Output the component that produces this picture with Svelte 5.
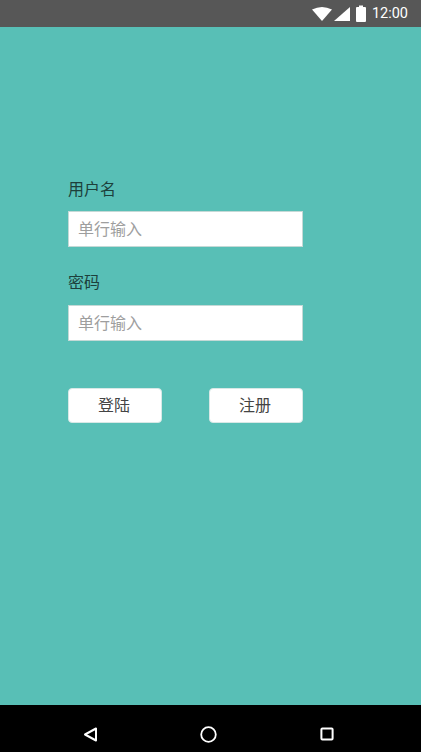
<script>
  let username = $state('');
  let password = $state('');
</script>

<div class="phone">
  <header class="status">
    <svg class="wifi" width="20" height="14" viewBox="0 0 20 14"><path d="M0 2.5 Q10 -2.5 20 2.5 L10 14Z" fill="#fff"/></svg>
    <svg class="signal" width="16" height="14" viewBox="0 0 16 14"><path d="M0 14 L16 0 V14Z" fill="#fff"/></svg>
    <svg class="battery" width="10" height="17" viewBox="0 0 10 17"><path d="M3 0.5 H7 V2 H9 Q10 2 10 3 V16 Q10 17 9 17 H1 Q0 17 0 16 V3 Q0 2 1 2 H3Z" fill="#fff"/></svg>
    <span class="time">12:00</span>
  </header>

  <main>
    <form class="login" onsubmit={(e) => e.preventDefault()}>
      <label class="first" for="username">用户名</label>
      <input id="username" bind:value={username} placeholder="单行输入" />
      <label class="second" for="password">密码</label>
      <input id="password" type="password" bind:value={password} placeholder="单行输入" />
      <div class="actions">
        <button type="submit">登陆</button>
        <button type="button">注册</button>
      </div>
    </form>
  </main>

  <nav class="softkeys">
    <svg width="15" height="15" viewBox="0 0 15 15"><path d="M13 1.5 V13.5 L2 7.5Z" fill="none" stroke="#fff" stroke-width="2" stroke-linejoin="round"/></svg>
    <svg class="home" width="17" height="17" viewBox="0 0 17 17"><circle cx="8.5" cy="8.5" r="7.3" fill="none" stroke="#fff" stroke-width="1.8"/></svg>
    <svg width="14" height="14" viewBox="0 0 14 14"><rect x="1.4" y="1.4" width="11.2" height="11.2" rx="1" fill="none" stroke="#fff" stroke-width="2"/></svg>
  </nav>
</div>

<style>
  :global(body) {
    background: #fff;
    font-family: "Noto Sans CJK SC", "Liberation Sans", sans-serif;
  }

  .phone {
    width: 421px;
    height: 752px;
    display: flex;
    flex-direction: column;
    background: #58bfb6;
  }

  .status {
    height: 27px;
    flex: none;
    display: flex;
    align-items: center;
    justify-content: flex-end;
    padding-right: 13px;
    box-sizing: border-box;
    background: #575757;
  }

  .wifi { margin-right: 2px; }
  .signal { margin-right: 6px; }
  .battery { margin-right: 6px; }

  .time {
    color: #fff;
    font-family: Roboto, sans-serif;
    font-size: 14.5px;
  }

  main {
    flex: 1;
    padding: 150px 0 0 68px;
  }

  .login {
    width: 235px;
    display: flex;
    flex-direction: column;
  }

  label {
    font-size: 16px;
    line-height: 22px;
    color: #1d3f3b;
  }

  .first { margin-bottom: 12px; }
  .second { margin: 23px 0 13px; }

  input {
    width: 100%;
    height: 36px;
    box-sizing: border-box;
    padding: 0 9px 2px;
    border: 1px solid #c4d9d6;
    background: #fff;
    font: inherit;
    font-size: 16px;
    outline: none;
  }

  input::placeholder { color: #9e9e9e; }

  .actions {
    display: flex;
    justify-content: space-between;
    margin-top: 47px;
  }

  button {
    width: 94px;
    height: 35px;
    padding: 0 2px 3px 0;
    border: 1px solid #d8e8e6;
    border-radius: 4px;
    background: #fff;
    color: #444;
    font: inherit;
    font-size: 16px;
  }

  .softkeys {
    height: 47px;
    flex: none;
    display: flex;
    align-items: center;
    background: #000;
    padding: 11px 87px 0 83px;
    box-sizing: border-box;
    justify-content: space-between;
  }

  .home { margin-right: 1px; }
</style>
